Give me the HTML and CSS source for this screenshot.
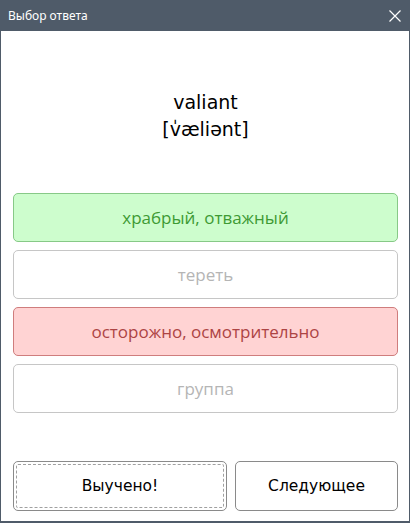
FILE: index.html
```html
<!DOCTYPE html>
<html lang="ru">
<head>
    <meta charset="utf-8">
    <meta name="viewport" content="width=device-width, initial-scale=1.0">
    <title>Выбор ответа</title>
    <link rel="stylesheet" href="styles.css">
</head>
<body>
    <div class="window">
        <div class="titlebar">
            <span class="title">Выбор ответа</span>
            <svg class="close" width="12" height="12" viewBox="0 0 12 12">
                <path d="M0.5 0.5 L11.5 11.5 M11.5 0.5 L0.5 11.5" stroke="#ffffff" stroke-width="1.2" fill="none"/>
            </svg>
        </div>
        <div class="content">
            <div class="word">
                <div>valiant</div>
                <div>[v&#x30D;æliənt]</div>
            </div>
            <div class="options">
                <div class="option correct">храбрый, отважный</div>
                <div class="option">тереть</div>
                <div class="option wrong">осторожно, осмотрительно</div>
                <div class="option">группа</div>
            </div>
            <div class="footer">
                <button class="btn learned">Выучено!</button>
                <button class="btn next">Следующее</button>
            </div>
        </div>
    </div>
</body>
</html>
```

FILE: styles.css
```css
*{
    padding: 0;
    margin: 0;
    box-sizing: border-box;
}
body{
    background-color: #ffffff;
    font-family: "Open Sans", "Noto Sans", sans-serif;
}
.window{
    width: 410px;
    height: 523px;
    display: flex;
    flex-direction: column;
    border: 1px solid #4f5b69;
    border-top: none;
    border-bottom-width: 2px;
}
.titlebar{
    height: 31px;
    background-color: #4f5b69;
    display: flex;
    align-items: center;
    justify-content: space-between;
    padding: 0 9px 0 8px;
    margin: 0 -1px;
}
.title{
    color: #ffffff;
    font-size: 12px;
    font-family: "Noto Sans", sans-serif;
}
.content{
    flex: 1;
    display: flex;
    flex-direction: column;
    padding: 0 11px 10px 12px;
}
.word{
    margin-top: 58px;
    text-align: center;
    font-family: "DejaVu Sans", sans-serif;
    font-size: 19px;
    line-height: 27px;
    color: #000000;
}
.options{
    margin-top: 50px;
    display: flex;
    flex-direction: column;
    gap: 8px;
}
.option{
    height: 49px;
    border: 1px solid #c6c6c6;
    border-radius: 5px;
    display: flex;
    align-items: center;
    justify-content: center;
    font-size: 17px;
    color: #b5b5b5;
}
.option.correct{
    background-color: #cdfdcd;
    border-color: #87c987;
    color: #3e9a34;
}
.option.wrong{
    background-color: #ffd3d3;
    border-color: #cf7d7d;
    color: #ad4444;
}
.footer{
    margin-top: auto;
    display: flex;
    gap: 8px;
}
.btn{
    height: 50px;
    background-color: #ffffff;
    border: 1px solid #8a8a8a;
    border-radius: 5px;
    font-family: "DejaVu Sans", sans-serif;
    font-size: 15.5px;
    color: #000000;
}
.learned{
    width: 214px;
    outline: 1px dashed #a0a0a0;
    outline-offset: -4px;
}
.next{
    flex: 1;
}
```
